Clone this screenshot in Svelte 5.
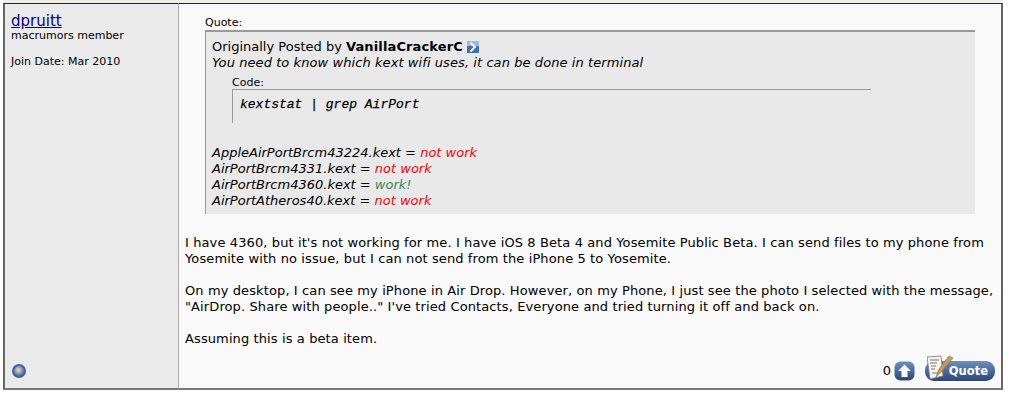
<script>
    const lines = [
        { file: 'AppleAirPortBrcm43224.kext', result: 'not work', ok: false },
        { file: 'AirPortBrcm4331.kext', result: 'not work', ok: false },
        { file: 'AirPortBrcm4360.kext', result: 'work!', ok: true },
        { file: 'AirPortAtheros40.kext', result: 'not work', ok: false }
    ];
</script>

<div class="page">
    <div class="post">
        <aside class="user">
            <div>
                <a class="name" href="#top">dpruitt</a>
                <div class="rank">macrumors member</div>
                <div class="joined">Join Date: Mar 2010</div>
            </div>
            <span class="status"></span>
        </aside>

        <main class="content">
            <div class="quote-label">Quote:</div>
            <div class="quote">
                <div class="posted">
                    Originally Posted by <b>VanillaCrackerC</b>
                    <svg class="go" width="12" height="12" viewBox="0 0 12 12">
                        <rect x="0" y="0" width="12" height="12" fill="#3f6fb5" />
                        <rect x="0" y="0" width="12" height="5" fill="#9db9e2" />
                        <path d="M3.5 1.5 L8 6 L3.5 10.5" fill="none" stroke="#1d3f7a" stroke-width="1" transform="translate(1 0)" />
                        <path d="M3.5 1.5 L8 6 L3.5 10.5" fill="none" stroke="#fff" stroke-width="2" />
                    </svg>
                </div>
                <div class="said">You need to know which kext wifi uses, it can be done in terminal</div>
                <div class="code-label">Code:</div>
                <pre class="code">kextstat | grep AirPort</pre>
                <div class="results">
                    {#each lines as l}
                        <div>{l.file} = <span class={l.ok ? 'ok' : 'bad'}>{l.result}</span></div>
                    {/each}
                </div>
            </div>

            <p>I have 4360, but it's not working for me. I have iOS 8 Beta 4 and Yosemite Public Beta. I can send files to my phone from Yosemite with no issue, but I can not send from the iPhone 5 to Yosemite.</p>
            <p>On my desktop, I can see my iPhone in Air Drop. However, on my Phone, I just see the photo I selected with the message, "AirDrop. Share with people.." I've tried Contacts, Everyone and tried turning it off and back on.</p>
            <p>Assuming this is a beta item.</p>

            <div class="actions">
                <span class="count">0</span>
                <svg width="21" height="20" viewBox="0 0 21 20">
                    <defs>
                        <linearGradient id="btn" x1="0" y1="0" x2="0" y2="1">
                            <stop offset="0" stop-color="#6f8fbd" />
                            <stop offset="0.5" stop-color="#4a6a9e" />
                            <stop offset="1" stop-color="#2c4673" />
                        </linearGradient>
                    </defs>
                    <rect x="0.5" y="0.5" width="20" height="19" rx="6" fill="url(#btn)" />
                    <path d="M10.5 3.5 L17 10 L13.5 10 L13.5 16 L7.5 16 L7.5 10 L4 10 Z" fill="#fff" />
                </svg>
                <div class="quote-btn">
                    <svg class="paper" width="28" height="26" viewBox="0 0 28 26">
                        <path d="M0 2 L14 1 L16 21 L3 24 Z" fill="#f4f4f0" stroke="#777" stroke-width="0.8" />
                        <path d="M3 5 H12 M3 8 H10 M4 11 H9 M4 14 H8 M5 18 H11" stroke="#777" stroke-width="1.2" />
                        <path d="M9 22 L12 14 L22 1 L26 3 L15 16 Z" fill="#c89a5c" stroke="#8a6a40" stroke-width="0.6" />
                    </svg>
                    <span>Quote</span>
                </div>
            </div>
        </main>
    </div>
</div>

<style>
    :global(body) {
        margin: 0;
        background: #fff;
    }

    .page {
        width: 1029px;
        height: 400px;
        box-sizing: border-box;
        font-family: "DejaVu Sans", Verdana, sans-serif;
        font-size: 13px;
        line-height: 16px;
        color: #000;
        overflow: hidden;
    }

    .post {
        width: 1000px;
        height: 390px;
        margin-left: 3px;
        box-sizing: border-box;
        padding-top: 3px;
        background: linear-gradient(#f1eee6 3px, transparent 3px);
        display: flex;
    }

    .user,
    .content {
        border-top: 1px solid #222;
        border-bottom: 2px solid #777;
        box-sizing: border-box;
    }

    .user {
        width: 176px;
        flex: none;
        border-left: 2px solid #666;
        border-right: 1px solid #aaa;
        background: #ebebeb;
        padding: 8px 6px 10px 6px;
        display: flex;
        flex-direction: column;
        justify-content: space-between;
        font-size: 11px;
    }

    .name {
        display: block;
        font-size: 15px;
        line-height: 18px;
        color: #000080;
        text-decoration: underline;
    }

    .rank {
        line-height: 14px;
        margin-top: -1px;
    }

    .joined {
        line-height: 14px;
        margin-top: 12px;
    }

    .status {
        width: 14px;
        height: 14px;
        margin-left: 1px;
        box-sizing: border-box;
        border-radius: 50%;
        border: 2px solid #3a5fc0;
        background: radial-gradient(circle at 45% 40%, #ddd, #666 75%);
    }

    .content {
        flex: 1;
        border-right: 2px solid #666;
        background: #f9f9f9;
        padding: 12px 6px 0 6px;
        min-width: 0;
    }

    p {
        letter-spacing: 0.11px;
    }

    .quote-label {
        font-size: 11px;
        line-height: 14px;
        margin-left: 20px;
    }

    .quote {
        width: 770px;
        height: 184px;
        margin-left: 20px;
        box-sizing: border-box;
        border-top: 2px solid #999;
        border-left: 1px solid #999;
        background: #e9e9e9;
        padding: 6px 6px 0 6px;
    }

    .posted {
        line-height: 17px;
    }

    .posted b {
        letter-spacing: 0.13px;
    }

    .go {
        vertical-align: -2px;
    }

    .said {
        font-style: italic;
        line-height: 15px;
        letter-spacing: 0.08px;
    }

    .code-label {
        font-size: 11px;
        line-height: 12px;
        margin: 7px 0 0 20px;
    }

    .code {
        width: 639px;
        height: 34px;
        margin: 0 0 0 20px;
        box-sizing: border-box;
        border-top: 1px solid #999;
        border-left: 1px solid #999;
        padding: 7px 7px;
        font-family: "Liberation Mono", "DejaVu Sans Mono", monospace;
        font-size: 13px;
        font-style: italic;
        line-height: 16px;
        color: #000;
        -webkit-text-stroke: 0.25px #000;
    }

    .results {
        margin-top: 22px;
        font-style: italic;
    }

    .bad {
        color: #ff0000;
    }

    .ok {
        color: #2e8b57;
    }

    p {
        margin: 21px 0 0 0;
    }

    p + p {
        margin-top: 16px;
    }

    .actions {
        display: flex;
        justify-content: flex-end;
        align-items: center;
        gap: 3px;
        margin-top: 14px;
    }

    .count {
        font-size: 13px;
    }

    .quote-btn {
        position: relative;
        width: 70px;
        height: 20px;
        margin-left: 7px;
        border-radius: 9px;
        background: linear-gradient(#6f8fbd, #4a6a9e 50%, #2c4673);
        color: #fff;
        font-weight: bold;
        font-size: 11.5px;
        line-height: 20px;
        text-align: right;
        padding-right: 7px;
        box-sizing: border-box;
    }

    .paper {
        position: absolute;
        left: 2px;
        top: -6px;
    }
</style>
